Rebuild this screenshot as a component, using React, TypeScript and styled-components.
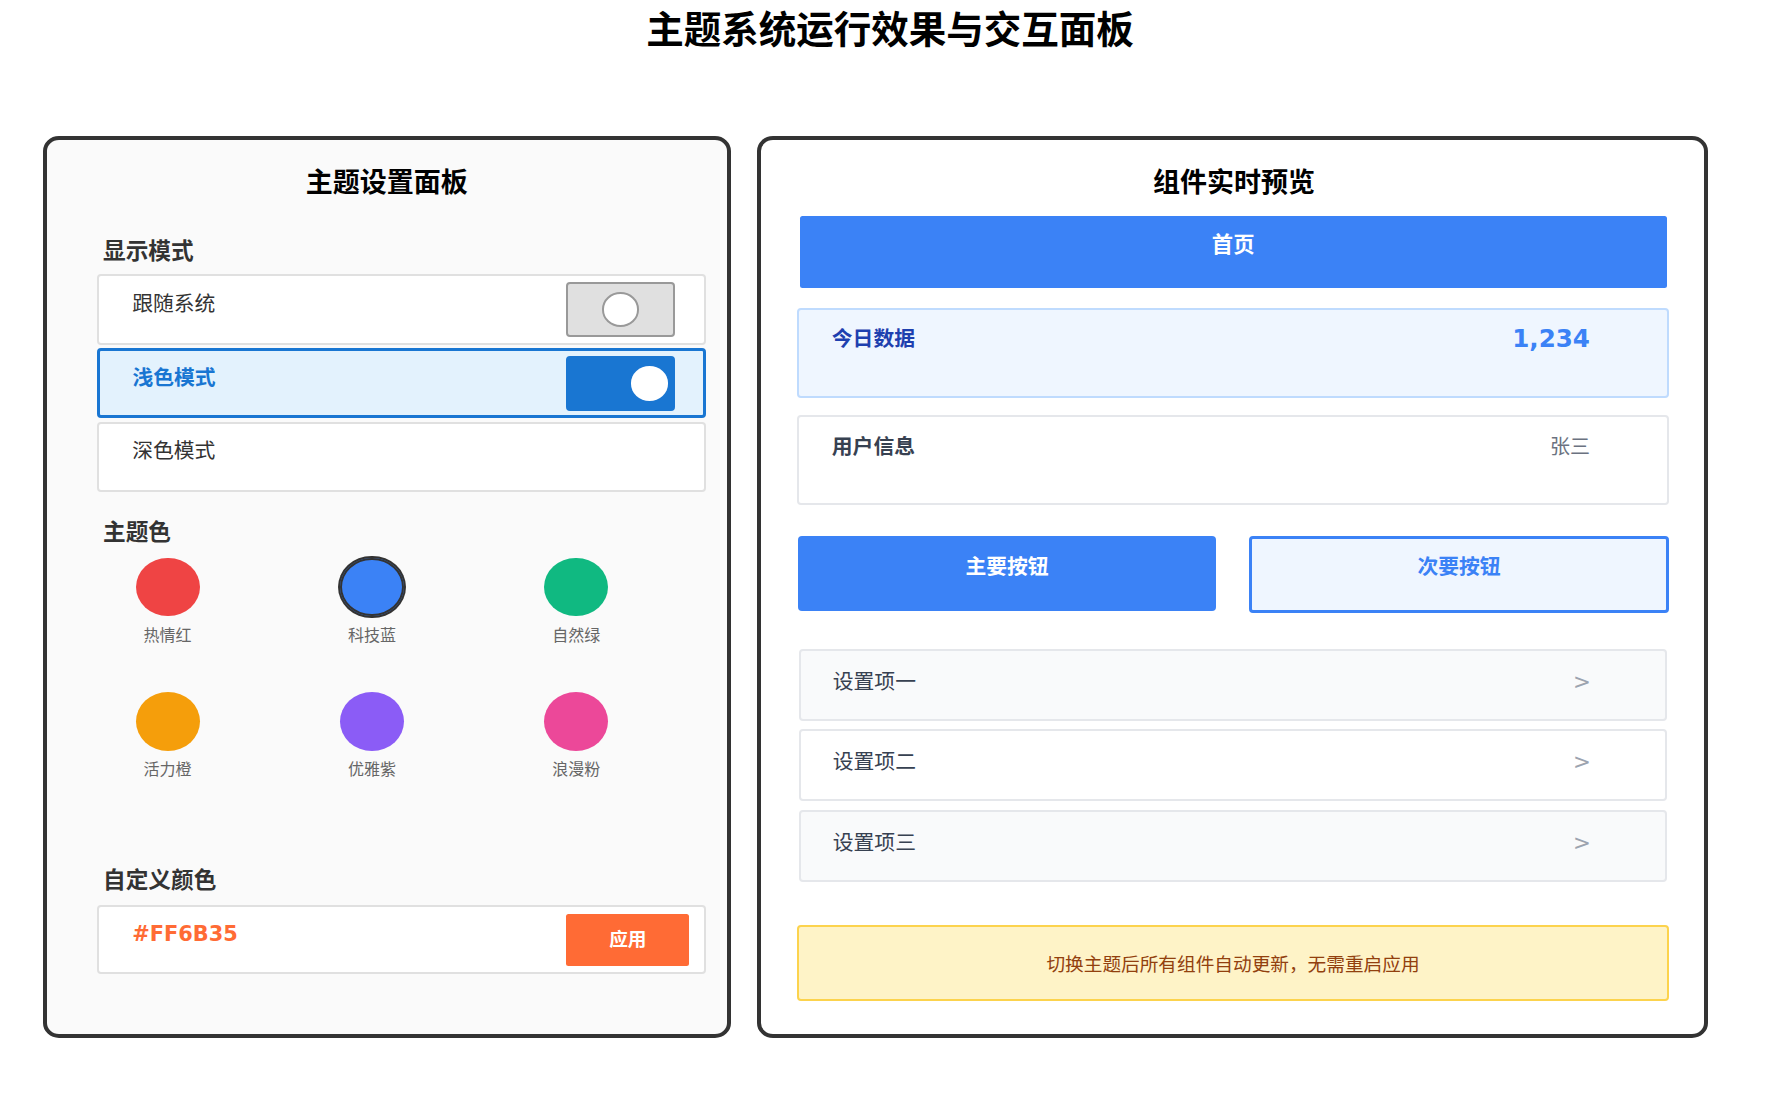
import React from "react";
import styled, { createGlobalStyle } from "styled-components";

const GlobalStyle = createGlobalStyle`
  html, body {
    margin: 0;
    padding: 0;
    background: #fff;
  }
  body {
    font-family: "DejaVu Sans", "Noto Sans CJK SC", sans-serif;
  }
  * {
    box-sizing: border-box;
  }
`;

const Page = styled.div`
  width: 1780px;
  height: 1104px;
  overflow: hidden;
`;

const PageTitle = styled.h1`
  margin: 0;
  height: 57.65px;
  padding-top: 1.8px;
  font-size: 37.5px;
  line-height: 57.65px;
  font-weight: bold;
  color: #000;
  text-align: center;
`;

const Board = styled.div`
  display: flex;
  gap: 26.67px;
  padding: 77.9px 0 0 42.67px;
`;

const Panel = styled.section<{ $width: number; $bg: string }>`
  width: ${(p) => p.$width}px;
  height: 902.6px;
  padding: 24.5px 20.67px 0 50px;
  background: ${(p) => p.$bg};
  border-style: solid;
  border-color: #333;
  border-width: 4.3px 4.7px;
  border-radius: 16px / 15px;
`;

const RightPanel = styled(Panel)`
  padding: 24.5px 34.67px 0 35.33px;
`;

const PanelTitle = styled.h2`
  margin: 0 0 0 -29.3px;
  padding-top: 1px;
  height: 36.8px;
  font-size: 27px;
  line-height: 36.8px;
  font-weight: bold;
  color: #000;
  text-align: center;
`;

const RightTitle = styled(PanelTitle)`
  margin: 0 0 0 2px;
`;

const SectionLabel = styled.h3<{ $top: number; $bottom: number }>`
  margin: ${(p) => p.$top}px 0 ${(p) => p.$bottom}px 6.4px;
  font-size: 22.67px;
  line-height: 29.44px;
  font-weight: bold;
  color: #333;
`;

const ModeList = styled.div`
  display: flex;
  flex-direction: column;
  gap: 3.31px;
`;

const ModeRow = styled.div<{ $active?: boolean }>`
  display: flex;
  align-items: flex-start;
  justify-content: space-between;
  height: 70.5px;
  padding: ${(p) => (p.$active ? "5.38px 28.13px 0 32.77px" : "6.18px 28.93px 0 33.57px")};
  background: ${(p) => (p.$active ? "#e3f2fd" : "#fff")};
  border: ${(p) => (p.$active ? "3.2px solid #1976d2" : "2.4px solid #e0e0e0")};
  border-radius: 4px;
`;

const ModeLabel = styled.span<{ $active?: boolean }>`
  margin-top: 7.6px;
  font-size: 20.8px;
  line-height: 29.44px;
  font-weight: ${(p) => (p.$active ? "bold" : "normal")};
  color: ${(p) => (p.$active ? "#1976d2" : "#333")};
`;

const Toggle = styled.div<{ $on?: boolean }>`
  display: flex;
  align-items: center;
  justify-content: ${(p) => (p.$on ? "flex-end" : "center")};
  width: 109.33px;
  height: 54.6px;
  padding: 0 4.67px;
  background: ${(p) => (p.$on ? "#1976d2" : "#e0e0e0")};
  border: 2.4px solid ${(p) => (p.$on ? "#1976d2" : "#999")};
  border-radius: 4px;
`;

const Knob = styled.div<{ $on?: boolean }>`
  width: 37.33px;
  height: 34.35px;
  background: #fff;
  border: ${(p) => (p.$on ? "none" : "2.4px solid #999")};
  border-radius: 50%;
`;

const SwatchGrid = styled.div`
  display: grid;
  grid-template-columns: repeat(3, 133.33px);
  column-gap: 71.07px;
  row-gap: 44.9px;
  margin-left: 4.27px;
`;

const Swatch = styled.div`
  display: flex;
  flex-direction: column;
  align-items: center;
`;

const SwatchDot = styled.div<{ $color: string; $selected?: boolean }>`
  width: 64px;
  height: 58.88px;
  background: ${(p) => p.$color};
  border-radius: 50%;
  box-shadow: ${(p) => (p.$selected ? "0 0 0 2px #333, inset 0 0 0 2px #333" : "none")};
`;

const SwatchName = styled.span`
  margin-top: 8.46px;
  font-size: 16px;
  line-height: 22.08px;
  color: #666;
`;

const CustomRow = styled.div`
  display: flex;
  align-items: flex-start;
  justify-content: space-between;
  height: 69.5px;
  padding: 6.8px 14.87px 0 33.57px;
  background: #fff;
  border: 2.4px solid #e0e0e0;
  border-radius: 4px;
`;

const HexValue = styled.span`
  margin-top: 6.2px;
  font-size: 20.9px;
  line-height: 29.44px;
  font-weight: bold;
  color: #ff6b35;
`;

const ApplyButton = styled.button`
  width: 122.67px;
  height: 52.13px;
  padding: 0 0 4px;
  font-family: inherit;
  font-size: 18.67px;
  font-weight: bold;
  color: #fff;
  background: #ff6b35;
  border: none;
  border-radius: 2.5px;
`;

const NavBar = styled.div`
  height: 72px;
  margin: 15.2px 2.8px 0 3.2px;
  padding-top: 14.47px;
  font-size: 21.33px;
  line-height: 29.44px;
  font-weight: bold;
  color: #fff;
  text-align: center;
  background: #3b82f6;
  border-radius: 2.5px;
`;

const InfoCard = styled.div<{ $top: number; $accent?: boolean }>`
  display: flex;
  align-items: flex-start;
  justify-content: space-between;
  height: 89.9px;
  margin-top: ${(p) => p.$top}px;
  padding: 15.38px 77.33px 0 33.2px;
  background: ${(p) => (p.$accent ? "#eff6ff" : "#fff")};
  border: 2.4px solid ${(p) => (p.$accent ? "#bfdbfe" : "#e5e7eb")};
  border-radius: 4px;
`;

const CardLabel = styled.span<{ $accent?: boolean }>`
  font-size: 20.8px;
  line-height: 29.44px;
  font-weight: bold;
  color: ${(p) => (p.$accent ? "#1e40af" : "#374151")};
`;

const CardValue = styled.span<{ $accent?: boolean }>`
  margin-top: ${(p) => (p.$accent ? -1 : 0)}px;
  font-size: ${(p) => (p.$accent ? 24.6 : 20)}px;
  line-height: 29.44px;
  font-weight: ${(p) => (p.$accent ? "bold" : "normal")};
  color: ${(p) => (p.$accent ? "#3b82f6" : "#6b7280")};
`;

const ButtonRow = styled.div`
  display: grid;
  grid-template-columns: 1fr 1fr;
  column-gap: 31.33px;
  align-items: start;
  margin-top: 30.3px;
`;

const PrimaryButton = styled.button`
  display: block;
  height: 74.83px;
  margin: 0.6px 1.73px 0;
  padding: 16.7px 0 28.69px;
  font-family: inherit;
  font-size: 20.8px;
  line-height: 29.44px;
  font-weight: bold;
  text-align: center;
  color: #fff;
  background: #3b82f6;
  border: none;
  border-radius: 4px;
`;

const SecondaryButton = styled.button`
  display: block;
  height: 77.65px;
  padding: 13.51px 0 27.1px;
  font-family: inherit;
  font-size: 20.8px;
  line-height: 29.44px;
  font-weight: bold;
  text-align: center;
  color: #3b82f6;
  background: #eff6ff;
  border: 3.8px solid #3b82f6;
  border-radius: 4px;
`;

const SettingsList = styled.div`
  display: flex;
  flex-direction: column;
  gap: 8.5px;
  margin: 35.43px 2.6px 0;
`;

const SettingsItem = styled.div<{ $shaded?: boolean }>`
  display: flex;
  align-items: flex-start;
  justify-content: space-between;
  height: 72px;
  padding: 16.87px 73.8px 0 31.53px;
  font-size: 20.8px;
  line-height: 29.44px;
  color: #374151;
  background: ${(p) => (p.$shaded ? "#f9fafb" : "#fff")};
  border: 2.4px solid #e5e7eb;
  border-radius: 4px;
`;

const Chevron = styled.span`
  margin-top: -1px;
  font-size: 21.33px;
  color: #9ca3af;
`;

const Notice = styled.div`
  display: flex;
  align-items: center;
  justify-content: center;
  height: 76px;
  margin-top: 43.5px;
  padding-bottom: 2px;
  font-size: 18.67px;
  color: #92400e;
  background: #fef3c7;
  border: 2.4px solid #fcd34d;
  border-radius: 4px;
`;

const modes = [
  { label: "跟随系统", toggle: "off" },
  { label: "浅色模式", toggle: "on", active: true },
  { label: "深色模式" },
];

const swatches = [
  { name: "热情红", color: "#ef4444" },
  { name: "科技蓝", color: "#3b82f6", selected: true },
  { name: "自然绿", color: "#10b981" },
  { name: "活力橙", color: "#f59e0b" },
  { name: "优雅紫", color: "#8b5cf6" },
  { name: "浪漫粉", color: "#ec4899" },
];

const settings = ["设置项一", "设置项二", "设置项三"];

const App = () => (
  <Page>
    <GlobalStyle />
    <PageTitle>主题系统运行效果与交互面板</PageTitle>
    <Board>
      <Panel $width={688} $bg="#fafafa">
        <PanelTitle>主题设置面板</PanelTitle>
        <SectionLabel $top={36.06} $bottom={7.73}>显示模式</SectionLabel>
        <ModeList>
          {modes.map((m) => (
            <ModeRow key={m.label} $active={m.active}>
              <ModeLabel $active={m.active}>{m.label}</ModeLabel>
              {m.toggle && (
                <Toggle $on={m.toggle === "on"}>
                  <Knob $on={m.toggle === "on"} />
                </Toggle>
              )}
            </ModeRow>
          ))}
        </ModeList>
        <SectionLabel $top={26.2} $bottom={9.86}>主题色</SectionLabel>
        <SwatchGrid>
          {swatches.map((s) => (
            <Swatch key={s.name}>
              <SwatchDot $color={s.color} $selected={s.selected} />
              <SwatchName>{s.name}</SwatchName>
            </Swatch>
          ))}
        </SwatchGrid>
        <SectionLabel $top={85} $bottom={9}>自定义颜色</SectionLabel>
        <CustomRow>
          <HexValue>#FF6B35</HexValue>
          <ApplyButton>应用</ApplyButton>
        </CustomRow>
      </Panel>
      <RightPanel $width={950.67} $bg="#fff">
        <RightTitle>组件实时预览</RightTitle>
        <NavBar>首页</NavBar>
        <InfoCard $top={19.86} $accent>
          <CardLabel $accent>今日数据</CardLabel>
          <CardValue $accent>1,234</CardValue>
        </InfoCard>
        <InfoCard $top={17.66}>
          <CardLabel>用户信息</CardLabel>
          <CardValue>张三</CardValue>
        </InfoCard>
        <ButtonRow>
          <PrimaryButton>主要按钮</PrimaryButton>
          <SecondaryButton>次要按钮</SecondaryButton>
        </ButtonRow>
        <SettingsList>
          {settings.map((s, i) => (
            <SettingsItem key={s} $shaded={i !== 1}>
              {s}
              <Chevron>&gt;</Chevron>
            </SettingsItem>
          ))}
        </SettingsList>
        <Notice>切换主题后所有组件自动更新，无需重启应用</Notice>
      </RightPanel>
    </Board>
  </Page>
);

export default App;
